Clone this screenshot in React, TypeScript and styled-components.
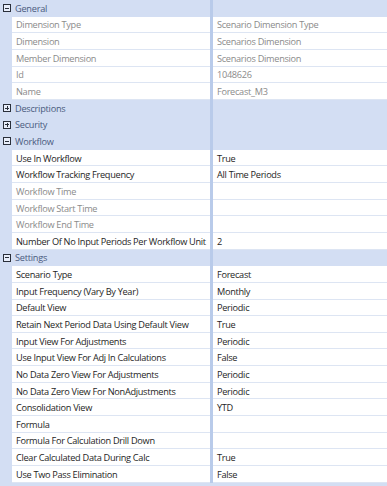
import React from "react";
import styled, { createGlobalStyle } from "styled-components";

const Global = createGlobalStyle`
  html, body { margin: 0; padding: 0; background: #d3def3; }
  body { font-family: "Open Sans", "Noto Sans", sans-serif; }
`;

const ROW_H = 483 / 29;

const Grid = styled.div`
  width: 387px;
  height: 486px;
  background: #d3def3;
  display: flex;
  flex-direction: column;
  overflow: hidden;
`;

const HeaderRow = styled.div`
  display: flex;
  height: ${ROW_H}px;
  align-items: stretch;
  background: #d3def3;
`;

const HeaderLabel = styled.div`
  width: 210px;
  display: flex;
  align-items: center;
  gap: 4px;
  padding-left: 3px;
  box-sizing: border-box;
  font-size: 9.2px;
  letter-spacing: -0.25px;
  color: #4a5b7e;
`;

const Toggle = styled.span<{ $open: boolean }>`
  width: 8px;
  height: 8px;
  box-sizing: border-box;
  border: 1px solid #2a2f3a;
  background: #e8eefa;
  position: relative;
  flex: none;
  &::before {
    content: "";
    position: absolute;
    left: 1px;
    right: 1px;
    top: 2.5px;
    height: 1px;
    background: #2a2f3a;
  }
  &::after {
    content: "";
    display: ${(p) => (p.$open ? "none" : "block")};
    position: absolute;
    top: 1px;
    bottom: 1px;
    left: 2.5px;
    width: 1px;
    background: #2a2f3a;
  }
`;

const Divider = styled.div`
  width: 3px;
  flex: none;
  background: #b9cbea;
`;

const Row = styled.div`
  display: flex;
  height: ${ROW_H}px;
  align-items: stretch;
`;

const Indent = styled.div`
  width: 12px;
  flex: none;
  background: #d3def3;
`;

const Cell = styled.div<{ $dim?: boolean; $grow?: boolean }>`
  background: #ffffff;
  border-bottom: 1px solid #dde5f3;
  box-sizing: border-box;
  display: flex;
  align-items: center;
  padding-left: 4px;
  padding-top: 1px;
  font-size: 9.2px;
  letter-spacing: -0.3px;
  white-space: nowrap;
  overflow: hidden;
  color: ${(p) => (p.$dim ? "#8b8b8b" : "#1e1e1e")};
  ${(p) => (p.$grow ? "flex: 1;" : "width: 198px; flex: none;")}
`;

type Item = { label: string; value?: string; dim?: boolean };
type Section = { title: string; open: boolean; items: Item[] };

const sections: Section[] = [
  {
    title: "General",
    open: true,
    items: [
      { label: "Dimension Type", value: "Scenario Dimension Type", dim: true },
      { label: "Dimension", value: "Scenarios Dimension", dim: true },
      { label: "Member Dimension", value: "Scenarios Dimension", dim: true },
      { label: "Id", value: "1048626", dim: true },
      { label: "Name", value: "Forecast_M3", dim: true },
    ],
  },
  { title: "Descriptions", open: false, items: [] },
  { title: "Security", open: false, items: [] },
  {
    title: "Workflow",
    open: true,
    items: [
      { label: "Use In Workflow", value: "True" },
      { label: "Workflow Tracking Frequency", value: "All Time Periods" },
      { label: "Workflow Time", dim: true },
      { label: "Workflow Start Time", dim: true },
      { label: "Workflow End Time", dim: true },
      { label: "Number Of No Input Periods Per Workflow Unit", value: "2" },
    ],
  },
  {
    title: "Settings",
    open: true,
    items: [
      { label: "Scenario Type", value: "Forecast" },
      { label: "Input Frequency (Vary By Year)", value: "Monthly" },
      { label: "Default View", value: "Periodic" },
      { label: "Retain Next Period Data Using Default View", value: "True" },
      { label: "Input View For Adjustments", value: "Periodic" },
      { label: "Use Input View For Adj In Calculations", value: "False" },
      { label: "No Data Zero View For Adjustments", value: "Periodic" },
      { label: "No Data Zero View For NonAdjustments", value: "Periodic" },
      { label: "Consolidation View", value: "YTD" },
      { label: "Formula" },
      { label: "Formula For Calculation Drill Down" },
      { label: "Clear Calculated Data During Calc", value: "True" },
      { label: "Use Two Pass Elimination", value: "False" },
    ],
  },
];

export default function App() {
  return (
    <>
      <Global />
      <Grid>
        {sections.map((s) => (
          <React.Fragment key={s.title}>
            <HeaderRow>
              <HeaderLabel>
                <Toggle $open={s.open} />
                {s.title}
              </HeaderLabel>
              <Divider />
            </HeaderRow>
            {s.items.map((it) => (
              <Row key={it.label}>
                <Indent />
                <Cell $dim={it.dim}>{it.label}</Cell>
                <Divider />
                <Cell $grow $dim={it.dim}>
                  {it.value ?? ""}
                </Cell>
              </Row>
            ))}
          </React.Fragment>
        ))}
      </Grid>
    </>
  );
}
